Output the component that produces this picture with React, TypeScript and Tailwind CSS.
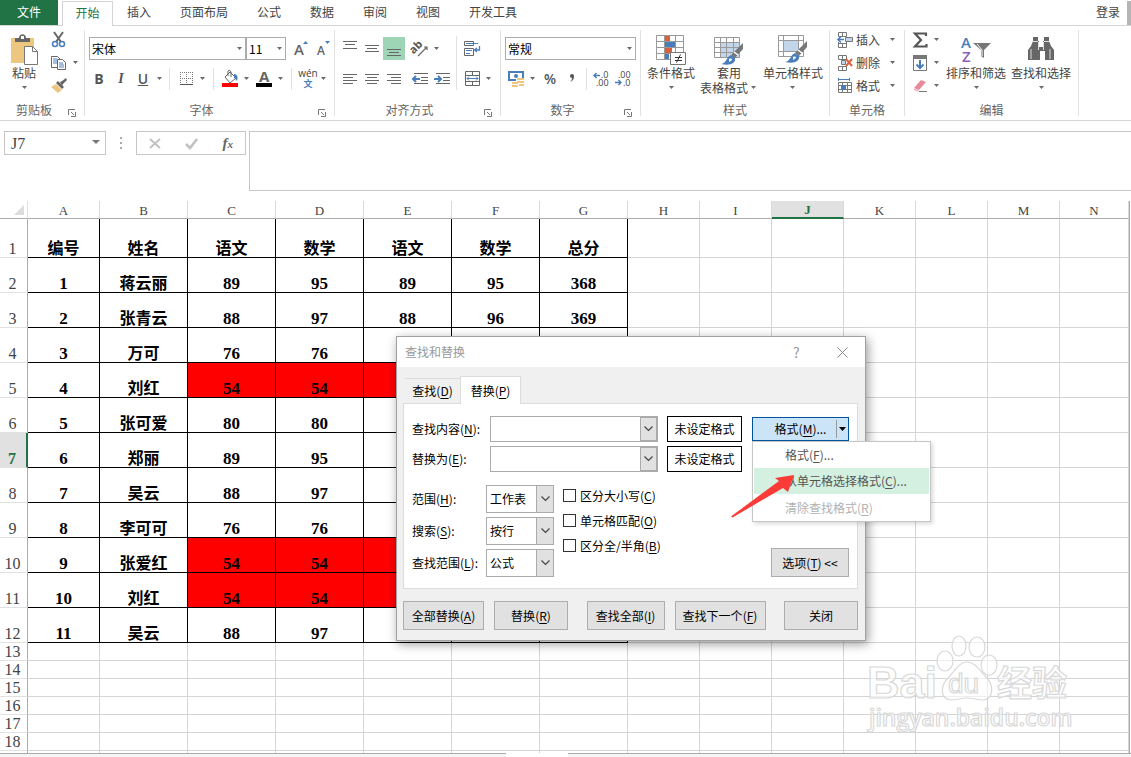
import { useState } from 'react';
import type { ReactNode } from 'react';
import clsx from 'clsx';

type Row = (string | number)[];

const tabs = ['插入', '页面布局', '公式', '数据', '审阅', '视图', '开发工具'];
const columns = ['A', 'B', 'C', 'D', 'E', 'F', 'G', 'H', 'I', 'J', 'K', 'L', 'M', 'N'];

const rows: Row[] = [
  ['编号', '姓名', '语文', '数学', '语文', '数学', '总分'],
  [1, '蒋云丽', 89, 95, 89, 95, 368],
  [2, '张青云', 88, 97, 88, 96, 369],
  [3, '万可', 76, 76],
  [4, '刘红', 54, 54],
  [5, '张可爱', 80, 80],
  [6, '郑丽', 89, 95],
  [7, '吴云', 88, 97],
  [8, '李可可', 76, 76],
  [9, '张爱红', 54, 54],
  [10, '刘红', 54, 54],
  [11, '吴云', 88, 97],
];

const emptyRows = [13, 14, 15, 16, 17, 18];

function Svg({ w, h, children }: { w: number; h: number; children: ReactNode }) {
  return (
    <svg width={w} height={h} viewBox={`0 0 ${w} ${h}`} fill="none" className="block shrink-0 overflow-visible" aria-hidden="true">
      {children}
    </svg>
  );
}

function Arrow() {
  return (
    <span className="flex w-[10px] shrink-0 justify-center">
      <Svg w={5} h={3}>
        <path d="M0 0h5L2.5 3z" fill="#6a6a6a" />
      </Svg>
    </span>
  );
}

function Tool({ label, arrow, active, children }: { label: string; arrow?: boolean; active?: boolean; children: ReactNode }) {
  return (
    <button type="button" aria-label={label} className="flex h-[23px] shrink-0 items-center">
      <span className={clsx('flex h-full w-[22px] items-center justify-center', active && 'bg-[#9fd5b7]')}>{children}</span>
      {arrow && <Arrow />}
    </button>
  );
}

function Sep() {
  return <span className="h-[22px] w-px shrink-0 bg-[#e1e1e1]" />;
}

function Group({ label, width, launcher, children }: { label: string; width: string; launcher?: boolean; children: ReactNode }) {
  return (
    <>
      <section className={clsx('flex h-[94px] shrink-0 flex-col', width)}>
        <div className="h-[74px]">{children}</div>
        <div className={clsx('flex h-[19px] items-center text-[#666]', launcher && 'pr-1')}>
          <span className="flex-1 text-center">{label}</span>
          {launcher && (
            <button type="button" aria-label={`${label}设置`} className="w-3 pt-1.5">
              <Svg w={8} h={8}>
                <path d="M.5 6V.5H7M3 3l3 3M7.5 3v4.500H3" stroke="#777" />
              </Svg>
            </button>
          )}
        </div>
      </section>
      <span className="my-1 w-px shrink-0 bg-[#e1e1e1]" />
    </>
  );
}

function RibbonSelect({ label, value, width }: { label: string; value: string; width: string }) {
  return (
    <span className={clsx('relative block h-[23px] shrink-0', width)}>
      <select aria-label={label} className="h-full w-full appearance-none border border-[#ababab] bg-white pl-0.5 text-black outline-none">
        <option>{value}</option>
      </select>
      <span className="pointer-events-none absolute top-[10px] right-[2px]">
        <Arrow />
      </span>
    </span>
  );
}

function BigButton({ lines, children }: { lines: string[]; children: ReactNode }) {
  return (
    <button type="button" className="flex flex-col items-center leading-[15px] text-[#444]">
      <span className="flex h-8 items-center">{children}</span>
      <span>{lines[0]}</span>
      <span className="flex h-[15px] items-center">
        {lines[1]}
        <Arrow />
      </span>
    </button>
  );
}

function CellButton({ label, children }: { label: string; children: ReactNode }) {
  return (
    <button type="button" className="flex h-[23px] items-center leading-[14px] text-[#444]">
      <span className="w-[19px]">{children}</span>
      <span className="w-[31px] text-left">{label}</span>
      <Arrow />
    </button>
  );
}

function Lines({ ys, short }: { ys: number[]; short?: 'left' | 'center' | 'right' }) {
  return (
    <Svg w={14} h={16}>
      {ys.map((y, i) => {
        const cut = i % 2 === 1;
        const x = !cut || short === 'left' ? 0 : short === 'right' ? 4 : 2;
        return <rect key={y} x={x} y={y} width={cut ? 10 : 14} height="1" fill="#666" />;
      })}
    </Svg>
  );
}

function Brush({ x, y }: { x: number; y: number }) {
  return (
    <g transform={`translate(${x} ${y})`}>
      <path d="M21 0v6l-8 9-4-3z" fill="#777" />
      <path d="M12 9l4 3" stroke="#fff" strokeWidth="1.500" />
      <path d="M9 12l4 3c1 5-4 8-14 6 6-1 5-7 10-9z" fill="#4a7ebb" />
      <path d="M7 16c2-1 3 0 3 1l-3 2z" fill="#fff" />
    </g>
  );
}

function ClipboardGroup() {
  return (
    <Group label="剪贴板" width="w-[84px]" launcher>
      <div className="flex">
        <div className="flex w-12 justify-center pt-[7px]">
          <BigButton lines={['粘贴']}>
            <Svg w={29} h={31}>
              <path d="M1 4h23v25H1z" fill="#edc77f" />
              <path d="M5 8V4h4c0-5 7-5 7 0h4v4z" fill="#666" />
              <rect x="11" y="2" width="3" height="3" fill="#fff" />
              <path d="M14.500 12.500h8l5 5v13h-13z" fill="#fff" stroke="#777" />
              <path d="M22.500 12.500v5h5" stroke="#777" />
            </Svg>
          </BigButton>
        </div>
        <div className="flex flex-col pt-[2px] pl-[-3px]">
          <Tool label="剪切">
            <Svg w={16} h={16}>
              <path d="M3 0l7 10M12 0L5 10" stroke="#666" strokeWidth="2" />
              <circle cx="4" cy="12" r="2.500" stroke="#4a7ebb" strokeWidth="1.500" />
              <circle cx="11" cy="12" r="2.500" stroke="#4a7ebb" strokeWidth="1.500" />
            </Svg>
          </Tool>
          <Tool label="复制" arrow>
            <Svg w={16} h={16}>
              <path d="M.5 1.500h6l3 3v8h-9z" fill="#fff" stroke="#666" />
              <path d="M2 4h4M2 6h4M2 8h4" stroke="#4a7ebb" />
              <path d="M6.500 4.500h5l3 3v7h-8z" fill="#fff" stroke="#666" />
              <path d="M8 8h4M8 10h5M8 12h5" stroke="#4a7ebb" />
            </Svg>
          </Tool>
          <Tool label="格式刷">
            <Svg w={16} h={16}>
              <path d="M0 9l5-3 6 6-4 3z" fill="#edc77f" />
              <path d="M5 5l2-2 6 6-2 2z" fill="#666" />
              <path d="M9 4l2-1 4-3 1 2-4 4-1 2z" fill="#666" />
            </Svg>
          </Tool>
        </div>
      </div>
    </Group>
  );
}

function FontGroup() {
  return (
    <Group label="字体" width="w-[249px]" launcher>
      <div className="flex flex-col gap-[7px] pt-[11px] pr-[5px] pl-[3px]">
        <div className="flex items-center pl-px">
          <RibbonSelect label="字体" value="宋体" width="w-[157px]" />
          <RibbonSelect label="字号" value="11" width="w-10" />
          <span className="flex pl-1">
            <Tool label="增大字号">
              <Svg w={14} h={18}>
                <text x="0" y="15" fontSize="15" fontFamily="Open Sans" fontWeight="600" fill="#666">A</text>
                <path d="M9 4h5l-2.500-3z" fill="#4a7ebb" />
              </Svg>
            </Tool>
            <Tool label="减小字号">
              <Svg w={14} h={18}>
                <text x="1" y="15" fontSize="12" fontFamily="Open Sans" fontWeight="600" fill="#666">A</text>
                <path d="M9 1h5l-2.500 3z" fill="#4a7ebb" />
              </Svg>
            </Tool>
          </span>
        </div>
        <div className="flex items-center justify-between">
          <div className="flex font-['Open_Sans',sans-serif] text-sm text-[#555]">
            <Tool label="加粗"><b>B</b></Tool>
            <Tool label="倾斜"><i className="font-['Liberation_Serif',serif] font-bold">I</i></Tool>
            <Tool label="下划线" arrow><u className="font-semibold">U</u></Tool>
          </div>
          <Sep />
          <Tool label="边框" arrow>
            <Svg w={13} h={14}>
              <path d="M.5 0v12M12.500 0v12M6.500 0v12M0 .5h13M0 6.500h13" stroke="#777" strokeDasharray="1 1" />
              <path d="M0 12.500h13" stroke="#555" />
            </Svg>
          </Tool>
          <Sep />
          <div className="flex gap-0.5">
            <Tool label="填充颜色" arrow>
              <Svg w={16} h={17}>
                <path d="M3 7l5-5 6 6-6 5z" fill="#fff" stroke="#666" />
                <path d="M6 6V1q2-2 3 1v5" stroke="#666" />
                <path d="M12 4c4 0 4 4 3 7-1-1-2-3-3-3z" fill="#4a7ebb" />
                <rect y="13" width="16" height="4" fill="#f00" />
              </Svg>
            </Tool>
            <Tool label="字体颜色" arrow>
              <Svg w={16} h={17}>
                <text x="3" y="12" fontSize="15" fontFamily="Open Sans" fontWeight="700" fill="#666">A</text>
                <rect y="13" width="16" height="4" fill="#000" />
              </Svg>
            </Tool>
          </div>
          <Sep />
          <Tool label="拼音指南" arrow>
            <Svg w={16} h={18}>
              <text x="8" y="7" fontSize="10" textAnchor="middle" fontFamily="Open Sans" fill="#444">wén</text>
              <text x="8" y="17" fontSize="9" textAnchor="middle" fontFamily="Noto Sans CJK SC" fontWeight="700" fill="#4a7ebb">文</text>
            </Svg>
          </Tool>
        </div>
      </div>
    </Group>
  );
}

function AlignGroup() {
  return (
    <Group label="对齐方式" width="w-[165px]" launcher>
      <div className="flex pl-1">
        <div className="flex flex-col gap-[7px] pt-[11px]">
          <div className="flex w-[117px]">
            <Tool label="顶端对齐"><Lines ys={[0, 3, 7]} /></Tool>
            <Tool label="垂直居中"><Lines ys={[4, 7, 10]} /></Tool>
            <Tool label="底端对齐" active><Lines ys={[8, 11, 14]} /></Tool>
            <span className="pl-1">
              <Tool label="方向" arrow>
                <Svg w={17} h={16}>
                  <text x="0" y="10" fontSize="11" fontFamily="Open Sans" fontWeight="700" fill="#555" transform="rotate(-45 5 10)">ab</text>
                  <path d="M6 15L15 6M12 6h3v3" stroke="#666" strokeWidth="1.200" />
                </Svg>
              </Tool>
            </span>
          </div>
          <div className="flex">
            <Tool label="左对齐"><Lines ys={[3, 6, 9, 12]} short="left" /></Tool>
            <Tool label="居中"><Lines ys={[3, 6, 9, 12]} short="center" /></Tool>
            <Tool label="右对齐"><Lines ys={[3, 6, 9, 12]} short="right" /></Tool>
            <span className="flex pl-1">
              <Tool label="减少缩进量">
                <Svg w={16} h={12}>
                  <path d="M2 .5h14M9 4.500h7M9 7.500h7M2 10.500h14" stroke="#666" />
                  <path d="M8 6H2M4 3L1 6l3 3" stroke="#4a7ebb" strokeWidth="2" />
                </Svg>
              </Tool>
              <Tool label="增加缩进量">
                <Svg w={16} h={12}>
                  <path d="M2 .5h14M9 4.500h7M9 7.500h7M2 10.500h14" stroke="#666" />
                  <path d="M0 6h6M4 3l3 3-3 3" stroke="#4a7ebb" strokeWidth="2" />
                </Svg>
              </Tool>
            </span>
          </div>
        </div>
        <span className="mt-[10px] h-[54px] w-px bg-[#e1e1e1]" />
        <div className="flex flex-col gap-[7px] pt-[11px] pl-1">
          <Tool label="自动换行">
            <Svg w={16} h={16}>
              <path d="M.5.500h9v4h-9zM.5 7.500h9v7h-9z" stroke="#666" />
              <path d="M2 2.500h12M2 9.500h6M2 12.500h4" stroke="#4a7ebb" />
              <path d="M15.500 5v4H11M13 7l-2.500 2 2.500 2" stroke="#4a7ebb" strokeWidth="1.300" />
            </Svg>
          </Tool>
          <Tool label="合并后居中" arrow>
            <Svg w={15} h={15}>
              <path d="M.5.500h14v14H.5zM0 4.500h15M0 10.500h15M7.500 0v4M7.500 11v4" stroke="#666" />
              <path d="M2 7.500h11M4 5.500l-2 2 2 2M11 5.500l2 2-2 2" stroke="#4a7ebb" />
            </Svg>
          </Tool>
        </div>
      </div>
    </Group>
  );
}

function NumberGroup() {
  return (
    <Group label="数字" width="w-[139px]" launcher>
      <div className="flex flex-col gap-[7px] pt-[11px] pl-1">
        <RibbonSelect label="数字格式" value="常规" width="w-[131px]" />
        <div className="flex items-center">
          <Tool label="会计数字格式" arrow>
            <Svg w={17} h={16}>
              <path d="M1 1h14v8H1z" stroke="#4a7ebb" strokeWidth="2" />
              <circle cx="8" cy="5" r="2" fill="#4a7ebb" />
              <path d="M8 7h9v9H3v-5h5z" fill="#fff" />
              <path d="M9 8h7M9 11h7M4 12h6M4 15h6M11 14h5" stroke="#edc77f" strokeWidth="2" />
            </Svg>
          </Tool>
          <span className="flex pl-0.5 font-['Open_Sans',sans-serif] text-sm font-semibold text-[#555]">
            <Tool label="百分比样式">%</Tool>
            <Tool label="千位分隔样式">
              <Svg w={6} h={9}>
                <path d="M1 2a2 2 0 014 0c0 3-1 5-4 6 1-1 2-2 2-4-1 0-2-1-2-2z" fill="#555" />
              </Svg>
            </Tool>
          </span>
          <span className="mx-[3px] flex"><Sep /></span>
          <Tool label="增加小数位数">
            <Svg w={16} h={16}>
              <path d="M1 4.500h6M3.500 2L1 4.500 3.500 7" stroke="#4a7ebb" strokeWidth="1.400" />
              <text x="8" y="7" fontSize="9" fontFamily="Open Sans" fill="#444">.0</text>
              <text x="3" y="15" fontSize="9" fontFamily="Open Sans" fill="#444">.00</text>
            </Svg>
          </Tool>
          <Tool label="减少小数位数">
            <Svg w={16} h={16}>
              <text x="3" y="7" fontSize="9" fontFamily="Open Sans" fill="#444">.00</text>
              <path d="M0 11.500h6M3.500 9L6 11.500 3.500 14" stroke="#4a7ebb" strokeWidth="1.400" />
              <text x="8" y="15" fontSize="9" fontFamily="Open Sans" fill="#444">.0</text>
            </Svg>
          </Tool>
        </div>
      </div>
    </Group>
  );
}

function StyleGroup() {
  return (
    <Group label="样式" width="w-[188px]">
      <div className="flex justify-between px-[6px] pt-[7px]">
        <BigButton lines={['条件格式']}>
          <Svg w={30} h={31}>
            <path d="M.5 1.500h27v24H.5zM8.500 1v25M19.500 1v25M0 7.500h28M0 13.500h28M0 19.500h28" stroke="#999" />
            <path d="M9 2h5v5H9zM9 14h7v5H9z" fill="#d9603b" />
            <path d="M9 8h10v5H9zM9 20h4v5H9z" fill="#4a7ebb" />
            <path d="M14.500 18.500h15v12h-15z" fill="#fff" stroke="#777" />
            <path d="M19 23.500h7M19 26.500h7M24.500 20.500l-4 8" stroke="#333" />
          </Svg>
        </BigButton>
        <BigButton lines={['套用', '表格格式']}>
          <Svg w={30} h={31}>
            <path d="M7 9h18v15H7z" fill="#c3d5ea" />
            <path d="M.5 3.500h25v20H.5zM6.500 3v21M12.500 3v21M19.500 3v21M0 8.500h26M0 13.500h26M0 18.500h26" stroke="#999" />
            <Brush x={8} y={9} />
          </Svg>
        </BigButton>
        <BigButton lines={['单元格样式']}>
          <Svg w={30} h={31}>
            <path d="M6 7h14v11H6z" fill="#c3d5ea" />
            <path d="M.5 1.500h25v21H.5zM5.500 1v22M20.500 1v22M0 6.500h26M0 17.500h26" stroke="#999" />
            <Brush x={8} y={7} />
          </Svg>
        </BigButton>
      </div>
    </Group>
  );
}

function CellsGroup() {
  return (
    <Group label="单元格" width="w-[74px]">
      <div className="flex flex-col pt-[2px] pl-[7px]">
        <CellButton label="插入">
          <Svg w={16} h={16}>
            <path d="M1.500.500h8v4h-8zM5.500 0v5M1.500 11.500h8v4h-8zM5.500 11v5M1.500 10v2M9.500 10v2" stroke="#777" />
            <path d="M8.500 5.500h7v4h-7z" fill="#c3d5ea" stroke="#777" />
            <path d="M1 7.500h6M4 4.500l-3 3 3 3" stroke="#4a7ebb" strokeWidth="1.600" />
          </Svg>
        </CellButton>
        <CellButton label="删除">
          <Svg w={16} h={16}>
            <path d="M1.500.500h8v4h-8zM5.500 0v5M1.500 11.500h8v4h-8zM5.500 11v5" stroke="#777" />
            <path d="M4.500 5.500h4v4h-4z" fill="#c3d5ea" stroke="#777" />
            <path d="M9 4l6 7M15 4l-6 7" stroke="#e0603f" strokeWidth="2" />
          </Svg>
        </CellButton>
        <CellButton label="格式">
          <Svg w={16} h={16}>
            <path d="M1.500 4.500h13v10h-13zM5.500 4v11M10.500 4v11M1 7.500h14M1 11.500h14" stroke="#777" />
            <path d="M4 7h5v5H4z" fill="#4a7ebb" />
            <path d="M1.500 0v3M12.500 0v3M2 1.500h10" stroke="#4a7ebb" />
          </Svg>
        </CellButton>
      </div>
    </Group>
  );
}

function EditGroup() {
  return (
    <Group label="编辑" width="w-[173px]">
      <div className="flex">
        <div className="flex w-[41px] shrink-0 flex-col pt-[2px] pl-1">
          <Tool label="自动求和" arrow>
            <Svg w={16} h={16}>
              <path d="M14 4V1.500H3L9 8l-6 6.500h11.500V12" stroke="#555" strokeWidth="2.200" />
            </Svg>
          </Tool>
          <Tool label="填充" arrow>
            <Svg w={14} h={16}>
              <path d="M.5.500h13v15H.5z" stroke="#777" />
              <path d="M0 0h14v4H0z" fill="#777" />
              <path d="M7 5v8M3.500 9.500L7 13l3.500-3.500" stroke="#4a7ebb" strokeWidth="2" />
            </Svg>
          </Tool>
          <Tool label="清除" arrow>
            <Svg w={15} h={14}>
              <path d="M8 1l5 2-7 8-5-2z" fill="#e98a9c" />
              <path d="M1 9l5 2-1 2-4-2z" fill="#f3b9c4" />
              <path d="M6 12.500h8" stroke="#777" />
            </Svg>
          </Tool>
        </div>
        <div className="flex gap-[5px] pt-[7px]">
          <BigButton lines={['排序和筛选']}>
            <Svg w={30} h={30}>
              <text x="0" y="14" fontSize="15" fontFamily="Open Sans" fontWeight="600" fill="#4a7ebb">A</text>
              <text x="1" y="28" fontSize="15" fontFamily="Open Sans" fontWeight="600" fill="#8d5fb8">Z</text>
              <path d="M12 9h18l-7 7v8l-3-2v-6z" fill="#777" />
              <path d="M16 10l5 6v6" stroke="#fff" />
            </Svg>
          </BigButton>
          <BigButton lines={['查找和选择']}>
            <Svg w={26} h={26}>
              <path d="M5 1h5v4h1v6h4V5h1V1h5v4l2 5 3 4v10h-9v-9h-5v9H0V14l3-4 2-5z" fill="#666" />
              <path d="M5 5.500h5M16 5.500h5M3 13v10M22 13v10M10.500 6v8M15.500 6v8" stroke="#ddd" />
            </Svg>
          </BigButton>
        </div>
      </div>
    </Group>
  );
}

function FormulaBar() {
  return (
    <div className="flex h-20 items-start pt-[10px] pl-1 font-['Liberation_Serif',serif]">
      <div className="relative w-[102px] shrink-0">
        <input aria-label="名称框" defaultValue="J7" className="h-6 w-full border border-[#c6c6c6] pt-0.5 pl-1.5 text-base text-[#444] outline-none" />
        <svg width="8" height="4" className="absolute top-[9px] right-[6px]" aria-hidden="true">
          <path d="M0 0h8L4 4z" fill="#777" />
        </svg>
      </div>
      <div className="flex h-6 w-[30px] shrink-0 flex-col items-center justify-center gap-[3px]">
        <span className="size-0.5 bg-[#aaa]" />
        <span className="size-0.5 bg-[#aaa]" />
        <span className="size-0.5 bg-[#aaa]" />
      </div>
      <div className="mr-[3px] flex h-6 w-[110px] shrink-0 items-center justify-around border border-[#c6c6c6]">
        <button type="button" aria-label="取消">
          <Svg w={12} h={11}><path d="M1 1l10 9M11 1L1 10" stroke="#c0c0c0" strokeWidth="1.800" /></Svg>
        </button>
        <button type="button" aria-label="输入">
          <Svg w={13} h={11}><path d="M1 6l4 4 7-9" stroke="#c0c0c0" strokeWidth="2.500" /></Svg>
        </button>
        <button type="button" aria-label="插入函数" className="text-[15px] leading-5 font-bold text-[#666] italic">
          f<span className="text-[11px]">x</span>
        </button>
      </div>
      <textarea aria-label="编辑栏" className="h-[60px] min-w-0 flex-1 resize-none border border-r-0 border-[#c6c6c6] outline-none" />
    </div>
  );
}

function RowHead({ n }: { n: number }) {
  const selected = n === 7;
  return (
    <th
      scope="row"
      className={clsx(
        'border-b border-b-[#e1e1e1] p-0 pr-[2px] align-bottom',
        selected ? 'border-r-2 border-r-[#217346] bg-[#e1e1e1] font-bold text-[#217346]' : 'border-r border-r-[#ababab] font-normal text-[#444]',
      )}
    >
      {n}
    </th>
  );
}

function Sheet() {
  return (
    <div className="overflow-hidden pr-px">
      <table className="w-full table-fixed border-separate border-spacing-0 border-r border-[#ababab] font-['Liberation_Serif','Noto_Sans_CJK_SC',serif] text-base leading-4">
        <colgroup>
          <col className="w-7" />
          {columns.map((c, i) => (
            <col key={c} className={i === 13 ? undefined : i > 0 && i < 7 ? 'w-[88px]' : 'w-[72px]'} />
          ))}
        </colgroup>
        <thead>
          <tr className="h-[18px]">
            <td className="border-r border-b border-r-[#e1e1e1] border-b-[#ababab] p-0 pr-[3px]">
              <svg width="10" height="10" className="ml-auto block" aria-hidden="true">
                <path d="M10 0v10H0z" fill="#dcdcdc" />
              </svg>
            </td>
            {columns.map((c) => (
              <th
                key={c}
                scope="col"
                className={clsx(
                  'border-r border-r-[#d9d9d9] p-0 align-bottom text-[13px] leading-[14px]',
                  c === 'J' ? 'border-b-2 border-b-[#217346] bg-[#e1e1e1] text-[#217346]' : 'border-b border-b-[#ababab] font-normal text-[#444]',
                )}
              >
                {c}
              </th>
            ))}
          </tr>
        </thead>
        <tbody>
          {rows.map((row, r) => (
            <tr key={r} className={r === 0 ? 'h-[39px]' : 'h-[35px]'}>
              <RowHead n={r + 1} />
              {columns.map((c, i) => (
                <td
                  key={c}
                  className={clsx(
                    'border-r border-b p-0 text-center align-bottom font-bold text-black',
                    typeof row[i] === 'number' && 'text-[17px]',
                    i < 7 ? 'border-black' : 'border-[#d4d4d4]',
                    i > 1 && i < 6 && row[2] === 54 && 'bg-[#ff0000]',
                  )}
                >
                  {row[i]}
                </td>
              ))}
            </tr>
          ))}
          {emptyRows.map((n) => (
            <tr key={n} className="h-[18px]">
              <RowHead n={n} />
              {columns.map((c) => (
                <td key={c} className="border-r border-b border-[#d4d4d4] p-0" />
              ))}
            </tr>
          ))}
          <tr className="h-[2px]">
            <td className="border-r border-r-[#ababab] p-0" />
            {columns.map((c) => (
              <td key={c} className="border-r border-[#d4d4d4] p-0" />
            ))}
          </tr>
        </tbody>
      </table>
    </div>
  );
}

function Key({ text, k, tail }: { text: string; k: string; tail?: string }) {
  return (
    <span className="whitespace-nowrap">
      {text}(<u className="underline-offset-2">{k}</u>){tail}
    </span>
  );
}

function Chevron() {
  return (
    <Svg w={9} h={6}>
      <path d="M.5.500l4 4 4-4" stroke="#444" strokeWidth="1.200" />
    </Svg>
  );
}

function FindRow({ id, label, k, children }: { id: string; label: string; k: string; children?: ReactNode }) {
  return (
    <div className="flex h-[26px] items-center">
      <label htmlFor={id} className="w-[78px]">
        <Key text={label} k={k} tail=":" />
      </label>
      <div className="mr-[9px] flex h-full w-[168px] border border-[#ababab] bg-white">
        <input id={id} className="min-w-0 flex-1 px-1 outline-none" />
        <button type="button" aria-label="展开" className="flex w-[17px] items-center justify-center border border-[#ababab] bg-[#e1e1e1]">
          <Chevron />
        </button>
      </div>
      <span className="mr-[10px] flex h-full w-[75px] items-center justify-center border border-black">未设定格式</span>
      {children}
    </div>
  );
}

function OptionSelect({ id, label, k, value }: { id: string; label: string; k: string; value: string }) {
  return (
    <div className="flex h-7 items-center">
      <label htmlFor={id} className="w-[74px]">
        <Key text={label} k={k} tail=":" />
      </label>
      <span className="relative h-full w-[68px]">
        <select id={id} className="h-full w-full appearance-none border border-[#ababab] bg-white pl-[3px] outline-none">
          <option>{value}</option>
        </select>
        <span className="pointer-events-none absolute inset-y-0 right-0 flex w-[18px] items-center justify-center border border-[#ababab] bg-[#e1e1e1]">
          <Chevron />
        </span>
      </span>
    </div>
  );
}

function Check({ label, k }: { label: string; k: string }) {
  return (
    <label className="flex h-[25px] items-center gap-1">
      <input type="checkbox" className="size-[13px] appearance-none border border-[#333] bg-white checked:bg-[#333]" />
      <Key text={label} k={k} />
    </label>
  );
}

function DialogButton({ width, children }: { width: string; children: ReactNode }) {
  return (
    <button type="button" className={clsx('flex h-[29px] items-center justify-center border border-[#adadad] bg-[#e1e1e1]', width)}>
      {children}
    </button>
  );
}

function FindDialog() {
  const [menuOpen, setMenuOpen] = useState(true);

  return (
    <div role="dialog" aria-label="查找和替换" className="absolute top-[336px] left-[396px] w-[470px] border border-[#a0a0a0] bg-[#f0f0f0] text-black shadow-[2px_3px_10px_rgba(0,0,0,0.4)]">
      <div className="flex h-[30px] items-center bg-white pr-[17px] pl-2 text-[#999]">
        <span className="flex-1">查找和替换</span>
        <button type="button" aria-label="帮助" className="w-8 text-left text-sm">?</button>
        <button type="button" aria-label="关闭窗口" className="pl-3">
          <Svg w={11} h={11}><path d="M.5.500l10 10M10.500.500l-10 10" stroke="#888" /></Svg>
        </button>
      </div>

      <div className="pr-[7px] pb-[10px] pl-[6px]">
        <div role="tablist" className="flex h-9 items-end pl-0.5">
          <button type="button" role="tab" className="h-[25px] w-[55px] border-t border-[#dcdcdc]"><Key text="查找" k="D" /></button>
          <button type="button" role="tab" aria-selected="true" className="relative -mb-px h-7 w-[61px] border border-b-0 border-[#dcdcdc] bg-white"><Key text="替换" k="P" /></button>
        </div>

        <div className="border border-[#dcdcdc] bg-white px-2 pt-3 pb-[11px]">
          <div className="flex flex-col gap-1">
            <FindRow id="find-what" label="查找内容" k="N">
              <div className="relative w-[97px] shrink-0">
                <button
                  type="button"
                  aria-expanded={menuOpen}
                  onClick={() => setMenuOpen(!menuOpen)}
                  className="flex h-6 w-full items-center border border-[#0054a0] bg-[#cce4f7]"
                >
                  <span className="flex-1 pl-3"><Key text="格式" k="M" tail="..." /></span>
                  <span className="flex h-[18px] w-3 items-center justify-center border-l border-[#999]">
                    <Svg w={7} h={4}><path d="M0 0h7L3.500 4z" fill="#000" /></Svg>
                  </span>
                </button>
                {menuOpen && (
                  <div role="menu" className="absolute top-full left-0 z-10 flex w-[179px] flex-col border border-[#c6c6c6] bg-white px-px text-[#555] shadow-[2px_2px_4px_rgba(0,0,0,0.15)]">
                    <button type="button" role="menuitem" className="h-[26px] pl-[31px] text-left"><Key text="格式" k="F" tail="..." /></button>
                    <button type="button" role="menuitem" className="h-[26px] bg-[#d3f0e0] pl-[31px] text-left"><Key text="从单元格选择格式" k="C" tail="..." /></button>
                    <button type="button" role="menuitem" disabled className="h-[27px] pl-[31px] text-left text-[#b1b1b1]"><Key text="清除查找格式" k="R" /></button>
                  </div>
                )}
              </div>
            </FindRow>
            <FindRow id="replace-with" label="替换为" k="E" />
          </div>

          <div className="mt-[11px] flex">
            <div className="mr-[9px] flex flex-col gap-1 pt-0.5">
              <OptionSelect id="within" label="范围" k="H" value="工作表" />
              <OptionSelect id="search" label="搜索" k="S" value="按行" />
              <OptionSelect id="look-in" label="查找范围" k="L" value="公式" />
            </div>
            <div className="flex flex-1 flex-col">
              <Check label="区分大小写" k="C" />
              <Check label="单元格匹配" k="O" />
              <Check label="区分全/半角" k="B" />
            </div>
            <div className="flex items-end">
              <DialogButton width="w-[78px]"><Key text="选项" k="T" tail=" <<" /></DialogButton>
            </div>
          </div>
        </div>

        <div className="flex justify-between pt-3">
          <div className="flex gap-[10px]">
            <DialogButton width="w-[81px]"><Key text="全部替换" k="A" /></DialogButton>
            <DialogButton width="w-[74px]"><Key text="替换" k="R" /></DialogButton>
          </div>
          <div className="flex gap-[10px]">
            <DialogButton width="w-[78px]"><Key text="查找全部" k="I" /></DialogButton>
            <DialogButton width="w-[91px]"><Key text="查找下一个" k="F" /></DialogButton>
          </div>
          <DialogButton width="w-[74px]">关闭</DialogButton>
        </div>
      </div>
    </div>
  );
}

function Watermark() {
  return (
    <svg width="212" height="100" viewBox="0 0 212 100" className="pointer-events-none absolute top-[632px] left-[864px]" aria-hidden="true">
      <g fill="#fff" fillOpacity="0.6" stroke="#d9d9d9" strokeWidth="1.200">
        <ellipse cx="81" cy="29" rx="8" ry="10" />
        <ellipse cx="95" cy="14" rx="7" ry="10" />
        <ellipse cx="113" cy="15" rx="8" ry="10" />
        <ellipse cx="125" cy="33" rx="8" ry="10" />
        <path d="M103 30c8 0 12 8 19 15 8 8 8 22-3 23-6 0-10-2-16-2s-10 2-16 2c-11-1-11-14-3-22 7-7 11-16 19-16z" />
        <text x="3" y="66" fontSize="45" fontWeight="700" fontFamily="Liberation Sans">Bai</text>
        <text x="84" y="61" fontSize="28" fontFamily="Liberation Sans">du</text>
        <text x="133" y="64" fontSize="35" fontWeight="700" fontFamily="Noto Sans CJK SC">经验</text>
        <text x="5" y="94" fontSize="23" fontWeight="600" fontFamily="Open Sans">jingyan.baidu.com</text>
      </g>
    </svg>
  );
}

export default function App() {
  return (
    <div className="relative flex min-h-screen flex-col overflow-hidden bg-white font-['Noto_Sans_CJK_SC',sans-serif] text-xs text-[#444]">
      <nav className="flex h-[26px] items-end border-b border-[#d4d4d4] pt-px">
        <button type="button" className="h-[25px] w-[58px] bg-[#217346] pb-0.5 text-white">文件</button>
        <button type="button" className="-mb-px ml-1 h-[25px] w-[51px] border border-b-0 border-[#d4d4d4] bg-white pb-0.5 text-[#217346]">开始</button>
        <div className="flex h-[25px] flex-1 items-center gap-[29px] pb-0.5 pl-[14px]">
          {tabs.map((t) => (
            <button key={t} type="button">{t}</button>
          ))}
        </div>
        <button type="button" className="mr-[7px] h-[25px] pb-0.5">登录</button>
        <span className="h-[24px] w-1 bg-[#b5b5b5]" />
      </nav>

      <div className="flex h-[95px] border-b border-[#d4d4d4]">
        <ClipboardGroup />
        <FontGroup />
        <AlignGroup />
        <NumberGroup />
        <StyleGroup />
        <CellsGroup />
        <EditGroup />
      </div>

      <FormulaBar />
      <Sheet />

      <div className="flex flex-1">
        <div className="h-1 w-[506px] border-t border-[#ababab] bg-[#f5f5f5]" />
        <div className="ml-[62px] h-1 flex-1 border-t border-[#ababab] bg-[#f5f5f5]" />
      </div>

      <FindDialog />

      <svg width="66" height="46" viewBox="0 0 66 46" className="pointer-events-none absolute top-[473px] left-[730px] z-20" aria-hidden="true">
        <path d="M64 2L45 5l4 3L1 43.500l1.500 1L53 15l5 4z" fill="#fb3b37" />
      </svg>

      <Watermark />
    </div>
  );
}
